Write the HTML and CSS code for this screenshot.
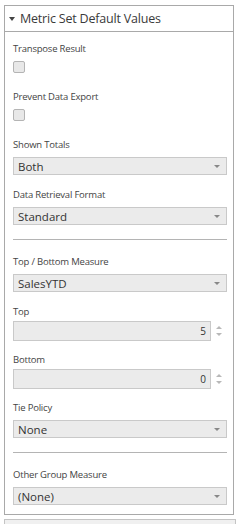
FILE: index.html
```html
<!DOCTYPE html>
<html>
<head>
    <title>Metric Set Default Values</title>
    <link rel="stylesheet" href="styles.css">
</head>
<body>
    <div class="panel">
        <div class="panel-header">
            <span class="caret"></span>
            <span class="panel-title">Metric Set Default Values</span>
        </div>
        <div class="panel-body">
            <div class="field check-field">
                <label>Transpose Result</label>
                <span class="checkbox"></span>
            </div>
            <div class="field check-field">
                <label>Prevent Data Export</label>
                <span class="checkbox"></span>
            </div>
            <div class="field">
                <label>Shown Totals</label>
                <div class="select"><span>Both</span><span class="arrow"></span></div>
            </div>
            <div class="field last">
                <label>Data Retrieval Format</label>
                <div class="select"><span>Standard</span><span class="arrow"></span></div>
            </div>

            <div class="separator"></div>

            <div class="field">
                <label>Top / Bottom Measure</label>
                <div class="select"><span>SalesYTD</span><span class="arrow"></span></div>
            </div>
            <div class="field num-field">
                <label>Top</label>
                <div class="number">
                    <div class="number-box">5</div>
                    <div class="spinner"><span class="up"></span><span class="down"></span></div>
                </div>
            </div>
            <div class="field num-field">
                <label>Bottom</label>
                <div class="number">
                    <div class="number-box">0</div>
                    <div class="spinner"><span class="up"></span><span class="down"></span></div>
                </div>
            </div>
            <div class="field last">
                <label>Tie Policy</label>
                <div class="select"><span>None</span><span class="arrow"></span></div>
            </div>

            <div class="separator"></div>

            <div class="field last">
                <label>Other Group Measure</label>
                <div class="select"><span>(None)</span><span class="arrow"></span></div>
            </div>
        </div>
    </div>
    <div class="next-panel"></div>
</body>
</html>
```

FILE: styles.css
```css
body {
    font-family: "Open Sans", "Noto Sans", sans-serif;
    color: #333;
    background: #fff;
    margin: 0;
    padding: 5px 0 0 4px;
}
.panel {
    width: 230px;
    box-sizing: border-box;
    border: 1px solid #a9a9a9;
}
.panel-header {
    height: 25px;
    border-bottom: 1px solid #a9a9a9;
    display: flex;
    align-items: center;
    padding-left: 4px;
}
.caret {
    width: 0;
    height: 0;
    border-left: 3px solid transparent;
    border-right: 3px solid transparent;
    border-top: 4px solid #444;
    margin-right: 5px;
}
.panel-title {
    font-size: 12.5px;
    color: #3a3a3a;
    letter-spacing: -0.2px;
}
.panel-body {
    padding: 10px 6px 9px 8px;
}
.field {
    padding-bottom: 13px;
}
.field.last {
    padding-bottom: 0;
}
.check-field {
    padding-bottom: 17px;
}
.num-field {
    padding-bottom: 12px;
}
label {
    display: block;
    font-size: 9.5px;
    line-height: 14px;
    height: 14px;
    color: #444;
    margin-bottom: 5px;
    letter-spacing: -0.2px;
}
.num-field label {
    margin-bottom: 2px;
}
.checkbox {
    display: block;
    width: 10px;
    height: 10px;
    border: 1px solid #b4b4b4;
    border-radius: 2px;
    background: #e8e8e8;
}
.select {
    height: 18px;
    box-sizing: border-box;
    border: 1px solid #c9c9c9;
    background: #ebebeb;
    display: flex;
    align-items: center;
    justify-content: space-between;
    padding: 0 6px 0 4px;
    font-size: 11.5px;
    color: #333;
}
.arrow {
    width: 0;
    height: 0;
    border-left: 3.5px solid transparent;
    border-right: 3.5px solid transparent;
    border-top: 3.5px solid #888;
}
.number {
    display: flex;
    height: 20px;
}
.number-box {
    flex: 1;
    box-sizing: border-box;
    border: 1px solid #c9c9c9;
    background: #ebebeb;
    font-size: 10px;
    text-align: right;
    padding-right: 4px;
    line-height: 18px;
    color: #333;
}
.spinner {
    width: 16px;
    display: flex;
    flex-direction: column;
    align-items: center;
    justify-content: center;
    gap: 4px;
}
.spinner .up {
    border-left: 3px solid transparent;
    border-right: 3px solid transparent;
    border-bottom: 3px solid #b8b8b8;
}
.spinner .down {
    border-left: 3px solid transparent;
    border-right: 3px solid transparent;
    border-top: 3px solid #b8b8b8;
}
.separator {
    height: 1px;
    background: #b4b4b4;
    margin: 14px 0 15px;
}
.separator + .field.last {
    margin-top: 1px;
}
.next-panel {
    margin-top: 4px;
    width: 232px;
    height: 10px;
    box-sizing: border-box;
    border: 1px solid #c4c4c4;
    background: #f0f0f0;
}
```
